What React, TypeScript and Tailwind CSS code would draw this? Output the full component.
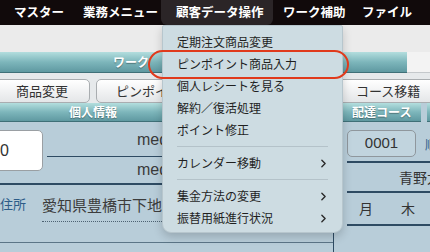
import { ChevronRight } from "lucide-react";

const jp = "font-['Noto_Sans_CJK_JP','Noto_Sans',sans-serif]";

const topMenu = [
  { label: "マスター", w: "w-[69px]" },
  { label: "業務メニュー", w: "w-[78px]" },
];

type Item = { label: string; sub?: boolean; sepBefore?: boolean };

const items: Item[] = [
  { label: "定期注文商品変更" },
  { label: "ピンポイント商品入力" },
  { label: "個人レシートを見る" },
  { label: "解約／復活処理" },
  { label: "ポイント修正" },
  { label: "カレンダー移動", sub: true, sepBefore: true },
  { label: "集金方法の変更", sub: true, sepBefore: true },
  { label: "振替用紙進行状況", sub: true },
];

function TealBar({ className, children }: { className?: string; children?: React.ReactNode }) {
  return (
    <div
      className={`flex items-center border-b border-[#3f7078] bg-gradient-to-b from-[#b3dede] via-[#7db6bb] to-[#5f99a1] text-[12px] font-bold text-white [text-shadow:0_1px_1px_rgba(0,0,0,0.35)] ${className ?? ""}`}
    >
      {children}
    </div>
  );
}

function Btn({ className, children }: { className?: string; children?: React.ReactNode }) {
  return (
    <div
      className={`flex h-[24px] items-center justify-center overflow-hidden whitespace-nowrap rounded-[5px] border border-[#a9adb0] bg-gradient-to-b from-white to-[#e4e6e8] text-[13px] text-[#333] ${className ?? ""}`}
    >
      {children}
    </div>
  );
}

export default function App() {
  return (
    <div className={`relative h-[252px] w-[430px] overflow-hidden bg-[#b8cdd9] ${jp}`}>
      {/* メニューバー */}
      <nav className="flex h-[25px] items-center bg-[#110a0b] pl-[14px] text-[12.5px] font-bold text-white">
        {topMenu.map((m) => (
          <span key={m.label} className={`shrink-0 ${m.w}`}>
            {m.label}
          </span>
        ))}
        <span className="flex h-[25px] w-[112px] shrink-0 items-center rounded-b-[6px] bg-[#2b2527] pl-[15px]">
          顧客データ操作
        </span>
        <span className="ml-[10px] w-[79px] shrink-0">ワーク補助</span>
        <span className="shrink-0">ファイル</span>
      </nav>

      {/* 背景の画面 */}
      <div className="h-[27px] bg-[#ebebeb]" />
      <div className="flex h-[21px] bg-[#f3f3f3]">
        <TealBar className="w-[407px] pl-[113px]">ワーク</TealBar>
        <div className="flex-1 border-b border-[#c4c8cb]" />
      </div>
      <div className="h-[6px] bg-[#e6e9eb]" />
      <div className="flex h-[24px] bg-[#e6e9eb]">
        <Btn className="ml-[-6px] w-[96px] shrink-0">商品変更</Btn>
        <Btn className="ml-[6px] w-[120px] shrink-0 justify-start pl-[19px]">ピンポイント商品入力</Btn>
        <Btn className="ml-[122px] w-[100px] shrink-0 justify-start pl-[17px]">コース移籍</Btn>
      </div>
      <div className="flex h-[19px] gap-[6px] bg-[#b8cdd9]">
        <TealBar className="w-[336px] shrink-0 justify-center pr-[150px]">個人情報</TealBar>
        <TealBar className="w-[79px] shrink-0 pl-[10px]">配達コース</TealBar>
        <TealBar className="flex-1" />
      </div>

      <div className="flex h-[140px]">
        {/* 個人情報 */}
        <div className="w-[334px] shrink-0 border-r border-[#2e4b63] text-[#3a3a3a]">
          <div className="flex h-[63px] border-b-2 border-[#2e4b63]">
            <div className="ml-[-6px] mt-[8px] flex h-[41px] w-[49px] items-center rounded-[5px] border border-[#9a9fa3] bg-white pl-[5px] font-['Liberation_Sans',sans-serif] text-[16px] text-[#333]">
              0
            </div>
            <div className="ml-[4px] flex-1">
              <div className="flex h-[35px] items-center border-b border-[#2e4b63] pl-[90px] pt-[2px] font-['Liberation_Sans',sans-serif] text-[16px]">
                med
              </div>
              <div className="flex h-[26px] items-center pl-[90px] font-['Liberation_Sans',sans-serif] text-[16px]">
                med
              </div>
            </div>
          </div>
          <div className="flex h-[58px] items-start border-b border-[#5b7587] pt-[9px]">
            <span className="w-[42px] shrink-0 text-[13px] text-[#2c5c88]">住所</span>
            <span className="w-[260px] whitespace-nowrap border-b border-dotted border-[#4d6272] pb-[4px] text-[15px] text-[#3c3c3c]">
              愛知県豊橋市下地町
            </span>
          </div>
        </div>

        {/* 配達コース */}
        <div className="min-w-0 flex-1 overflow-hidden pl-[13px] text-[#333]">
          <div className="flex items-center">
            <div className="mt-[8px] flex h-[27px] w-[69px] shrink-0 items-center justify-center rounded-[5px] border border-[#8f979d] bg-[#c1d4de] font-['Liberation_Sans',sans-serif] text-[15px]">
              0001
            </div>
            <span className="ml-[9px] mt-[8px] shrink-0 text-[13px] text-[#2c5c88]">順</span>
          </div>
          <div className="mt-[4px] flex h-[30px] items-center whitespace-nowrap border-t-2 border-[#2e4b63] pl-[52px] text-[14px]">
            青野太郎
          </div>
          <div className="flex h-[33px] items-center gap-[28px] border-t-2 border-[#2e4b63] pl-[12px] text-[14px]">
            <span>月</span>
            <span>木</span>
          </div>
          <div className="border-t-2 border-[#2e4b63]" />
        </div>
      </div>

      {/* ドロップダウンメニュー */}
      <div className="absolute left-[162px] top-[25px] h-[208px] w-[181px] rounded-b-[9px] rounded-t-[2px] border border-[#b7c6cd] bg-[#cddce2] pt-[5px] shadow-[0_4px_10px_rgba(0,0,0,0.18)]">
        {items.map((it) => (
          <div key={it.label}>
            {it.sepBefore && <div className="mx-[14px] my-[5px] h-px bg-[#b4c2c9]" />}
            <div className="flex h-[22px] items-center justify-between pl-[14px] pr-[12px] text-[12px] text-[#1f1f1f]">
              <span>{it.label}</span>
              {it.sub && <ChevronRight size={13} strokeWidth={2.6} className="text-[#2a2a2a]" />}
            </div>
          </div>
        ))}
      </div>

      {/* 赤い囲み */}
      <div className="absolute left-[148px] top-[50px] h-[29px] w-[201px] rounded-full border-2 border-[#e03a1c]" />
    </div>
  );
}
